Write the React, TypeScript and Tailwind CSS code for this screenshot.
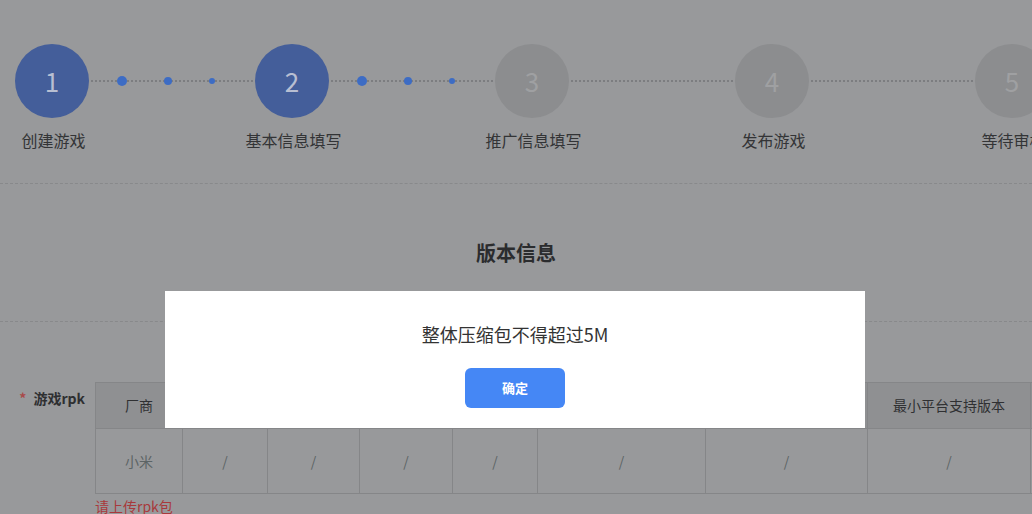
import React from "react";

const steps = [
  { n: 1, label: "创建游戏", active: true },
  { n: 2, label: "基本信息填写", active: true },
  { n: 3, label: "推广信息填写", active: false },
  { n: 4, label: "发布游戏", active: false },
  { n: 5, label: "等待审核", active: false },
];

const cols = [
  { w: "w-[86px]", h: "厂商", v: "小米" },
  { w: "w-[85px]", h: "版本号", v: "/" },
  { w: "w-[92px]", h: "版本名称", v: "/" },
  { w: "w-[93px]", h: "包名", v: "/" },
  { w: "w-[85px]", h: "大小", v: "/" },
  { w: "w-[168px]", h: "上传时间", v: "/" },
  { w: "w-[162px]", h: "签名", v: "/" },
  { w: "w-[163px]", h: "最小平台支持版本", v: "/" },
  { w: "w-[120px]", h: "操作", v: "/" },
];

function Connector({ dots }: { dots: boolean }) {
  return (
    <div className="relative flex h-[74px] w-[166px] items-center">
      <div className="absolute left-[2px] right-[2px] top-[36px] border-t-2 border-dotted border-[#7c7d80]" />
      {dots && (
        <div className="relative flex items-center gap-[37px] pl-[28px]">
          <span className="h-[10px] w-[10px] rounded-full bg-[#3d6cc4]" />
          <span className="h-[8px] w-[8px] rounded-full bg-[#3d6cc4]" />
          <span className="h-[6px] w-[6px] rounded-full bg-[#3d6cc4]" />
        </div>
      )}
    </div>
  );
}

export default function App() {
  return (
    <div
      className="relative h-[514px] w-[1032px] overflow-hidden bg-[#98999b]"
      style={{ fontFamily: '"Noto Sans CJK SC", "Microsoft YaHei", sans-serif' }}
    >
      {/* steps */}
      <div className="flex items-start pl-[15px] pt-[44px]">
        {steps.map((s, i) => (
          <React.Fragment key={s.n}>
            <div className="flex w-[74px] shrink-0 flex-col items-center">
              <div
                className={
                  "flex h-[74px] w-[74px] items-center justify-center rounded-full text-[26px] leading-none " +
                  (s.active ? "bg-[#445e9a] text-[#b8bfd2]" : "bg-[#8c8d8f] text-[#9fa0a2]")
                }
              >
                {s.n}
              </div>
              <div className="mt-[11px] whitespace-nowrap pl-[3px] text-[16px] leading-[22px] text-[#333436]">
                {s.label}
              </div>
            </div>
            {i < steps.length - 1 && (
              <div className="shrink-0">
                <Connector dots={i < 2} />
              </div>
            )}
          </React.Fragment>
        ))}
      </div>

      <div className="mt-[32px] border-t border-dashed border-[#88898b]" />

      <div className="pt-[55px] text-center text-[20px] font-bold leading-[28px] text-[#2b2c2e]">
        版本信息
      </div>

      <div className="mt-[54px] border-t border-dashed border-[#88898b]" />

      {/* form row */}
      <div className="mt-[60px] flex">
        <div className="w-[95px] shrink-0 pr-[10px] pt-[6px] text-right text-[14px] font-bold leading-[20px] text-[#2e2f31]">
          <span className="mr-[7px] text-[#a84a4a]">*</span>
          游戏rpk
        </div>
        <div className="flex flex-col">
          <div className="flex border border-[#858688]">
            {cols.map((c, i) => (
              <div key={i} className={c.w + " flex shrink-0 flex-col " + (i > 0 ? "border-l border-[#858688]" : "")}>
                <div className="flex h-[45px] items-center justify-center bg-[#8f9092] text-[14px] text-[#2f3032]">
                  {c.h}
                </div>
                <div className="flex h-[65px] items-center justify-center border-t border-[#858688] text-[14px] text-[#5c6465]">
                  {c.v}
                </div>
              </div>
            ))}
          </div>
          <div className="pt-[2px] text-[14px] leading-[20px] text-[#a8393c]">请上传rpk包</div>
        </div>
      </div>

      {/* modal */}
      <div className="absolute left-[165px] top-[291px] flex h-[137px] w-[700px] flex-col items-center bg-white">
        <div className="mt-[31px] text-[18px] leading-[24px] text-[#333333]">整体压缩包不得超过5M</div>
        <button className="mt-[22px] h-[40px] w-[100px] rounded-[6px] bg-[#4587f5] text-[13px] font-bold text-white">
          确定
        </button>
      </div>
    </div>
  );
}
